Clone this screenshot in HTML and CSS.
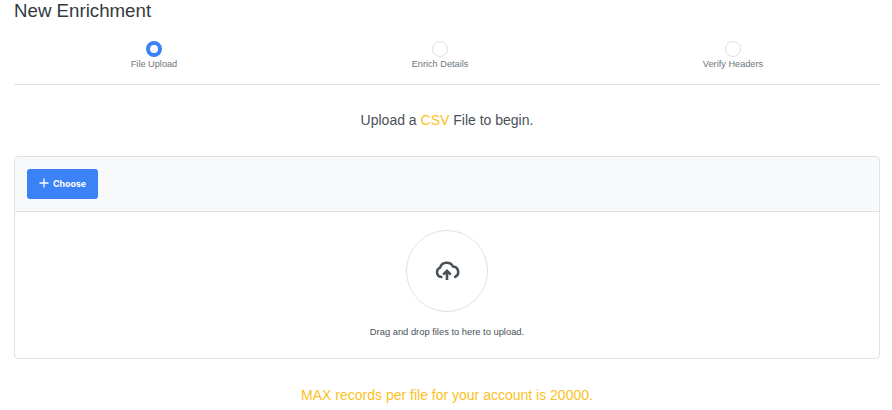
FILE: index.html
```html
<!DOCTYPE html>
<html lang="en">
<head>
    <meta charset="UTF-8">
    <meta name="viewport" content="width=device-width, initial-scale=1.0">
    <title>New Enrichment</title>
    <link rel="stylesheet" href="styles.css">
</head>
<body>
    <div class="page">
        <h1>New Enrichment</h1>

        <div class="steps">
            <div class="step active">
                <span class="step-dot"></span>
                <span class="step-label">File Upload</span>
            </div>
            <div class="step">
                <span class="step-dot"></span>
                <span class="step-label">Enrich Details</span>
            </div>
            <div class="step">
                <span class="step-dot"></span>
                <span class="step-label">Verify Headers</span>
            </div>
        </div>

        <p class="intro">Upload a <span class="accent">CSV</span> File to begin.</p>

        <div class="upload">
            <div class="upload-bar">
                <button class="choose" type="button">
                    <svg class="choose-icon" viewBox="0 0 12 12" width="12" height="12" aria-hidden="true">
                        <path d="M6 1.5v9M1.5 6h9" fill="none" stroke="currentColor" stroke-width="1.3"/>
                    </svg>
                    Choose
                </button>
            </div>
            <div class="upload-body">
                <div class="upload-circle">
                    <svg viewBox="0 0 24 24" width="26" height="26" aria-hidden="true">
                        <path d="M6.8 17.6A4.6 4.6 0 0 1 5.6 8.8 6.6 6.6 0 0 1 17.6 7.9 5 5 0 0 1 19.5 17.4" fill="none" stroke="#495057" stroke-width="2.3" stroke-linecap="round"/>
                        <path d="M12 20.4v-8M8.5 15.4 12 11.9l3.5 3.5" fill="none" stroke="#495057" stroke-width="2.4"/>
                    </svg>
                </div>
                <p class="upload-hint">Drag and drop files to here to upload.</p>
            </div>
        </div>

        <p class="limit">MAX records per file for your account is 20000.</p>
    </div>
</body>
</html>
```

FILE: styles.css
```css
:root {
    --primary-color: #3b82f6;
    --accent-color: #fbbf24;
    --text-color: #495057;
    --heading-color: #343a40;
    --border-color: #dee2e6;
}

body {
    margin: 0;
    background: #ffffff;
    color: var(--text-color);
    font-family: "Liberation Sans", Arial, sans-serif;
}

.page {
    padding: 0 12px 0 14px;
}

h1 {
    margin: 0;
    font-size: 18.7px;
    font-weight: 400;
    line-height: 21px;
    color: var(--heading-color);
}

.steps {
    display: grid;
    grid-template-columns: 280px 292px 294px;
    margin-top: 20px;
    padding-bottom: 14px;
    border-bottom: 1px solid var(--border-color);
}

.step {
    display: flex;
    flex-direction: column;
    align-items: center;
}

.step-dot {
    box-sizing: border-box;
    width: 16px;
    height: 16px;
    border: 1px solid var(--border-color);
    border-radius: 50%;
    background: #ffffff;
}

.step.active .step-dot {
    border: 4px solid var(--primary-color);
}

.step-label {
    margin-top: 1px;
    font-size: 9.2px;
    line-height: 12px;
    color: #6c757d;
}

.intro {
    margin: 26px 0 0;
    font-size: 14px;
    line-height: 18px;
    text-align: center;
}

.accent {
    color: var(--accent-color);
}

.upload {
    margin-top: 27px;
    border: 1px solid var(--border-color);
    border-radius: 4px;
}

.upload-bar {
    padding: 12px;
    background: #f8f9fa;
    border-bottom: 1px solid var(--border-color);
    border-radius: 4px 4px 0 0;
}

.choose {
    display: flex;
    align-items: center;
    gap: 3px;
    height: 30px;
    padding: 0 12px 2px 11px;
    border: none;
    border-radius: 3px;
    background: var(--primary-color);
    color: #ffffff;
    font-family: Inter, sans-serif;
    font-size: 8.8px;
    font-weight: 700;
}

.upload-body {
    display: flex;
    flex-direction: column;
    align-items: center;
    padding: 18px 0 20px;
}

.upload-circle {
    box-sizing: border-box;
    display: flex;
    align-items: center;
    justify-content: center;
    width: 82px;
    height: 82px;
    border: 1px solid var(--border-color);
    border-radius: 50%;
}

.upload-hint {
    margin: 14px 0 0;
    font-size: 9.35px;
    line-height: 12px;
}

.limit {
    margin: 27px 0 0;
    font-size: 14px;
    line-height: 18px;
    text-align: center;
    color: var(--accent-color);
}
```
